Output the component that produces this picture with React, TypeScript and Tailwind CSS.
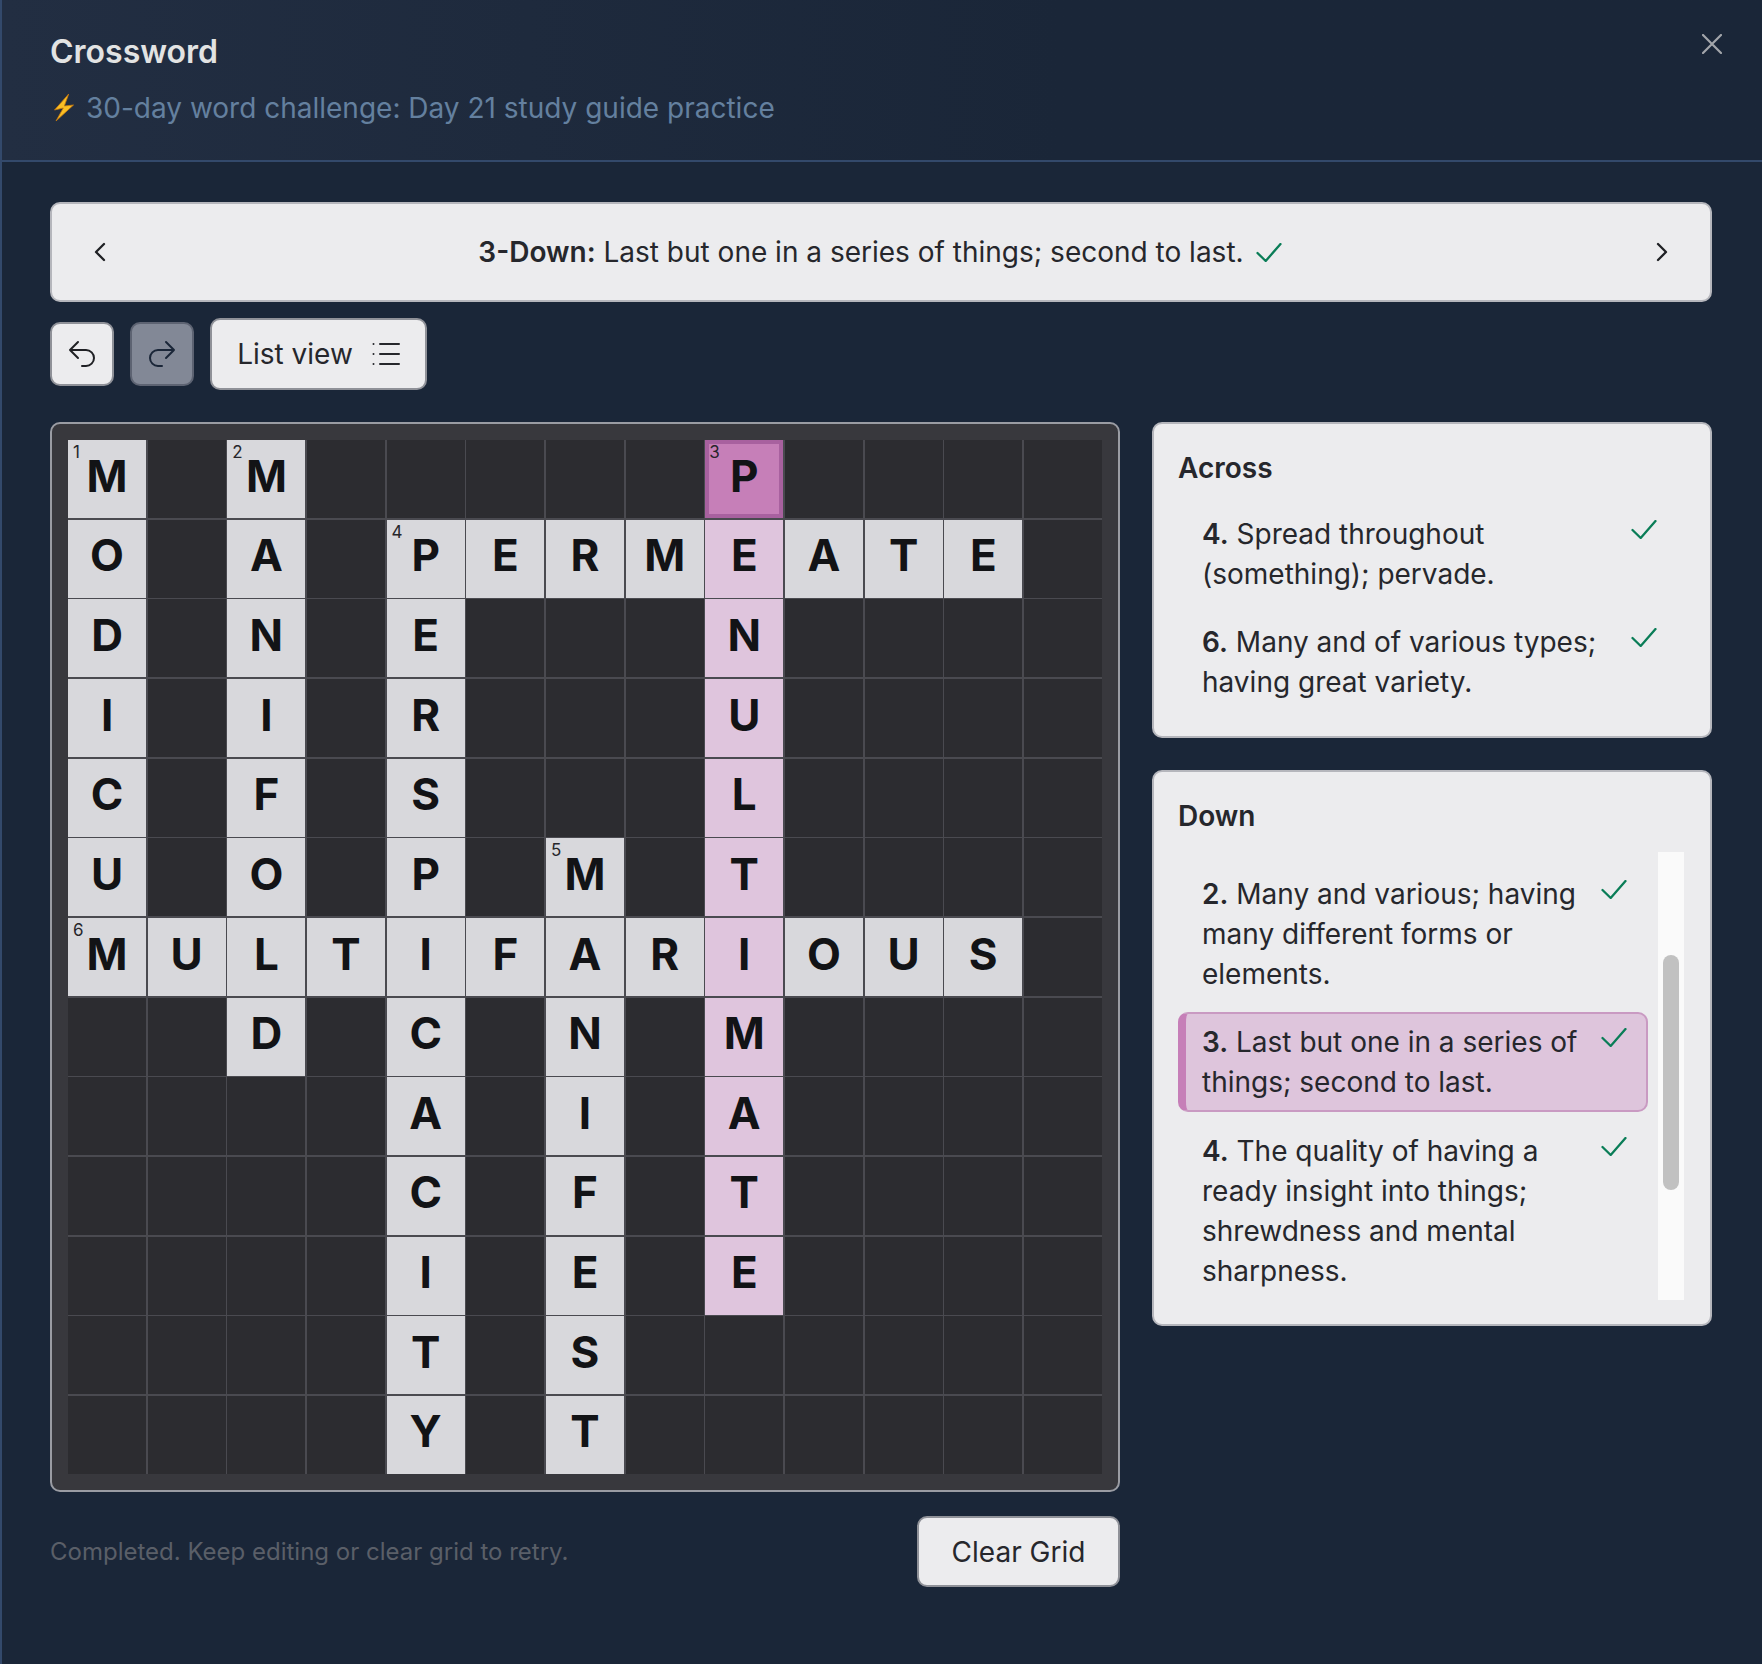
const GRID = [
  'M.M.....P....',
  'O.A.PERMEATE.',
  'D.N.E...N....',
  'I.I.R...U....',
  'C.F.S...L....',
  'U.O.P.M.T....',
  'MULTIFARIOUS.',
  '..D.C.N.M....',
  '....A.I.A....',
  '....C.F.T....',
  '....I.E.E....',
  '....T.S......',
  '....Y.T......',
];

const NUMBERS: Record<string, number> = { '0-0': 1, '0-2': 2, '0-8': 3, '1-4': 4, '5-6': 5, '6-0': 6 };

const ACROSS = [
  { n: 4, text: 'Spread throughout (something); pervade.' },
  { n: 6, text: 'Many and of various types; having great variety.' },
];

const DOWN = [
  { n: 2, text: 'Many and various; having many different forms or elements.' },
  { n: 3, text: 'Last but one in a series of things; second to last.', active: true },
  { n: 4, text: 'The quality of having a ready insight into things; shrewdness and mental sharpness.' },
];

function CheckMark({ className = '' }: { className?: string }) {
  return (
    <svg className={`h-[19px] w-[26px] shrink-0 text-[#0a7d57] ${className}`} viewBox="0 0 26 19" fill="none" stroke="currentColor" strokeWidth={2.300} strokeLinecap="round" strokeLinejoin="round">
      <path d="M1.5 10l8.2 8L24.5 1" />
    </svg>
  );
}

function Cell({ letter, row, col }: { letter: string; row: number; col: number }) {
  const num = NUMBERS[`${row}-${col}`];
  if (letter === '.') return <div className="aspect-square bg-[#2c2c30]" />;

  let tone = 'bg-[#d8d8dc]';
  if (col === 8 && row <= 10) tone = 'bg-[#dfc5dd]';
  if (col === 8 && row === 0) tone = 'border-4 border-[#a8619f] bg-[#c67fb8]';

  return (
    <div className={`relative flex aspect-square items-center justify-center pb-[7px] text-[44px] leading-none font-bold text-[#121316] ${tone}`}>
      {num && <span className={`absolute text-[17px] leading-none font-normal text-[#26262b] ${col === 8 ? 'top-0 left-0' : 'top-1 left-[5px]'}`}>{num}</span>}
      {letter}
    </div>
  );
}

function Clue({ n, text, active, tight }: { n: number; text: string; active?: boolean; tight?: boolean }) {
  const box = active
    ? 'mb-px border-2 border-l-8 border-[#c99ac2] border-l-[#c67fb8] bg-[#dec5dc] py-2 pr-[19px] pl-[16px]'
    : `py-[10px] pl-6 ${tight ? 'pr-[21px]' : 'pr-[29px]'}`;

  return (
    <div className={`flex items-start justify-between rounded-[10px] ${box}`}>
      <p className="w-[398px] text-[28px] leading-10 text-[#26272c]">
        <b className="font-semibold">{n}.</b> {text}
      </p>
      <CheckMark className="mt-[6px]" />
    </div>
  );
}

export default function App() {
  return (
    <div className="min-h-[1664px] border-l-2 border-[#33496b] bg-[#1a2638] font-['Inter',sans-serif]">
      <header className="relative h-[162px] border-b-2 border-[#33496b] bg-linear-to-r from-[#222e42] to-[#1a2638] to-60% px-[48px] pt-[32px]">
        <h1 className="text-[32px] leading-10 font-semibold text-[#e2e3e3]">Crossword</h1>
        <div className="mt-4 flex items-center gap-3 text-[28px] leading-10 text-[#64809f]">
          <svg className="ml-1 h-[28px] w-[20px]" viewBox="0 0 20 28">
            <path d="M14.700 0 .5 16l8.800-2L2 27l17.500-16-9.200 1z" fill="#fbbf24" stroke="#c8780e" strokeWidth="0.8" strokeLinejoin="round" />
          </svg>
          <span>30-day word challenge: Day 21 study guide practice</span>
        </div>
        <button className="absolute top-[34px] right-[40px] text-[#a3a6ab]">
          <svg className="h-[20px] w-[20px]" viewBox="0 0 20 20" fill="none" stroke="currentColor" strokeWidth={2.200} strokeLinecap="round">
            <path d="M1 1l18 18M19 1 1 19" />
          </svg>
        </button>
      </header>

      <main className="px-[48px] pt-[40px] pr-[50px]">
        <div className="flex h-[100px] items-center justify-between rounded-[10px] border-2 border-[#b5b6bc] bg-[#ececee] px-[41px] text-[#1f2024]">
          <svg className="h-[20px] w-[13px]" viewBox="0 0 13 20" fill="none" stroke="currentColor" strokeWidth={2.300} strokeLinecap="round" strokeLinejoin="round">
            <path d="M11 2 3 10l8 8" />
          </svg>
          <div className="mr-[2px] flex items-center gap-3 text-[28px] leading-10 text-[#26272c]">
            <p>
              <b className="font-semibold">3-Down:</b> Last but one in a series of things; second to last.
            </p>
            <CheckMark />
          </div>
          <svg className="h-[20px] w-[13px]" viewBox="0 0 13 20" fill="none" stroke="currentColor" strokeWidth={2.300} strokeLinecap="round" strokeLinejoin="round">
            <path d="m2 2 8 8-8 8" />
          </svg>
        </div>

        <div className="mt-4 flex items-center">
          <button className="flex h-[64px] w-[64px] items-center justify-center rounded-[10px] border-2 border-[#8f9198] bg-[#ececee] text-[#1f2024]">
            <svg className="h-8 w-8" viewBox="0 0 24 24" fill="none" stroke="currentColor" strokeWidth={1.500} strokeLinecap="round" strokeLinejoin="round">
              <path d="M9 15 3 9m0 0 6-6M3 9h12a6 6 0 0 1 0 12h-3" />
            </svg>
          </button>
          <button className="ml-4 flex h-[64px] w-[64px] items-center justify-center rounded-[10px] border-2 border-[#5d6372] bg-[#828896] text-[#1a2638]">
            <svg className="h-8 w-8" viewBox="0 0 24 24" fill="none" stroke="currentColor" strokeWidth={1.500} strokeLinecap="round" strokeLinejoin="round">
              <path d="m15 15 6-6m0 0-6-6m6 6H9a6 6 0 0 0 0 12h3" />
            </svg>
          </button>
          <button className="ml-4 flex h-[72px] w-[217px] items-center justify-center gap-[19px] rounded-[10px] border-2 border-[#8f9198] bg-[#ececee] text-[28px] text-[#26272c]">
            List view
            <svg className="h-6 w-7" viewBox="0 0 28 24" fill="none" stroke="currentColor" strokeWidth={2} strokeLinecap="round">
              <path d="M8 2h19M8 12h19M8 22h19" />
              <path d="M1.500 2h.01M1.500 12h.01M1.500 22h.01" />
            </svg>
          </button>
        </div>

        <div className="mt-8 flex items-start gap-8">
          <div className="w-[1070px] shrink-0">
            <div className="rounded-[10px] border-2 border-[#9a9ca3] bg-[#38383d] p-4">
              <div className="grid grid-cols-13 gap-[1.5px] bg-[#4a4a50]">
                {GRID.map((line, row) => line.split('').map((letter, col) => <Cell key={`${row}-${col}`} letter={letter} row={row} col={col} />))}
              </div>
            </div>
            <div className="mt-6 flex items-center justify-between">
              <p className="text-[24px] text-[#5a5f68]">Completed. Keep editing or clear grid to retry.</p>
              <button className="h-[71px] w-[203px] rounded-[10px] border-2 border-[#8f9198] bg-[#ececee] text-[28px] text-[#26272c]">Clear Grid</button>
            </div>
          </div>

          <div className="flex min-w-0 flex-1 flex-col gap-8">
            <section className="rounded-[10px] border-2 border-[#b5b6bc] bg-[#ececee] p-6">
              <h2 className="text-[28px] leading-10 font-semibold text-[#26272c]">Across</h2>
              <div className="mt-4 flex flex-col gap-2">
                {ACROSS.map((c) => (
                  <Clue key={c.n} n={c.n} text={c.text} />
                ))}
              </div>
            </section>

            <section className="rounded-[10px] border-2 border-[#b5b6bc] bg-[#ececee] pt-6 pr-[26px] pb-6 pl-6">
              <h2 className="text-[28px] leading-10 font-semibold text-[#26272c]">Down</h2>
              <div className="mt-4 flex h-[448px] gap-[10px]">
                <div className="flex flex-1 flex-col gap-2 overflow-hidden pt-3">
                  {DOWN.map((c) => (
                    <Clue key={c.n} n={c.n} text={c.text} active={c.active} tight />
                  ))}
                </div>
                <div className="w-[26px] shrink-0 bg-[#fafafa] px-[5px] pt-[103px]">
                  <div className="h-[235px] rounded-full bg-[#c1c1c1]" />
                </div>
              </div>
            </section>
          </div>
        </div>
      </main>
    </div>
  );
}
